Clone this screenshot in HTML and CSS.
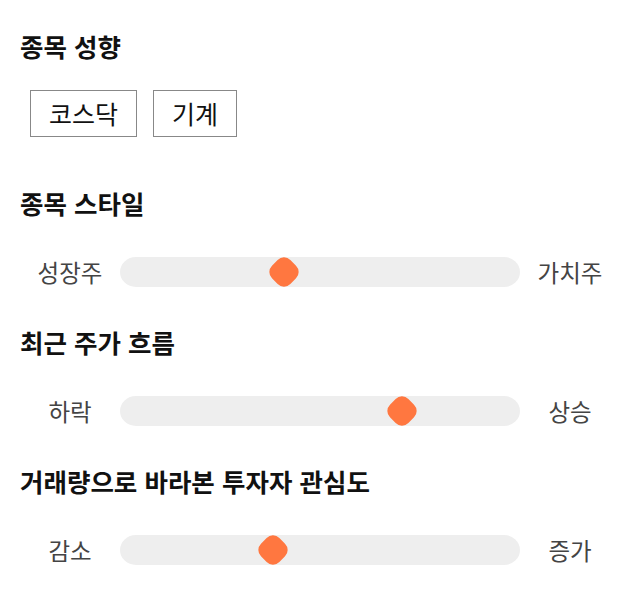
FILE: index.html
```html
<!DOCTYPE html>
<html lang="ko">

<head>
    <meta charset="UTF-8">
    <title>종목 분석</title>
    <link rel="stylesheet" href="styles.css">
</head>

<body>
    <div class="section">
        <h2 class="title">종목 성향</h2>
        <div class="tags">
            <span class="tag">코스닥</span>
            <span class="tag">기계</span>
        </div>
    </div>

    <div class="section">
        <h2 class="title">종목 스타일</h2>
        <div class="slider-row">
            <span class="label">성장주</span>
            <div class="track">
                <span class="thumb" style="left: 41%;"></span>
            </div>
            <span class="label">가치주</span>
        </div>
    </div>

    <div class="section">
        <h2 class="title">최근 주가 흐름</h2>
        <div class="slider-row">
            <span class="label">하락</span>
            <div class="track">
                <span class="thumb" style="left: 70.6%;"></span>
            </div>
            <span class="label">상승</span>
        </div>
    </div>

    <div class="section">
        <h2 class="title">거래량으로 바라본 투자자 관심도</h2>
        <div class="slider-row">
            <span class="label">감소</span>
            <div class="track">
                <span class="thumb" style="left: 38.2%;"></span>
            </div>
            <span class="label">증가</span>
        </div>
    </div>
</body>

</html>
```

FILE: styles.css
```css
* {
    padding: 0;
    margin: 0;
    box-sizing: border-box;
}

body {
    padding: 31px 20px 0;
    font-family: "Noto Sans CJK KR", "Noto Sans", sans-serif;
    color: #111;
    background: #fff;
}

.section {
    margin-bottom: 42px;
}

.title {
    height: 30px;
    font-size: 25.5px;
    font-weight: 700;
    line-height: 30px;
    color: #111;
}

.tags {
    display: flex;
    gap: 16px;
    margin: 29px 0 0 10px;
    padding-bottom: 9px;
}

.tag {
    display: inline-block;
    height: 47px;
    padding: 0 18px;
    border: 1px solid #888;
    font-size: 25px;
    line-height: 45px;
    color: #111;
}

.slider-row {
    display: grid;
    grid-template-columns: 100px 1fr 100px;
    align-items: center;
    margin-top: 37px;
    height: 30px;
}

.label {
    text-align: center;
    font-size: 23.5px;
    color: #444;
}

.track {
    position: relative;
    height: 30px;
    background: #eee;
    border-radius: 16px / 15px;
}

.thumb {
    position: absolute;
    top: 50%;
    width: 26px;
    height: 26px;
    margin: -13px 0 0 -13px;
    background: #ff7740;
    border-radius: 9px;
    transform: rotate(45deg);
}
```
